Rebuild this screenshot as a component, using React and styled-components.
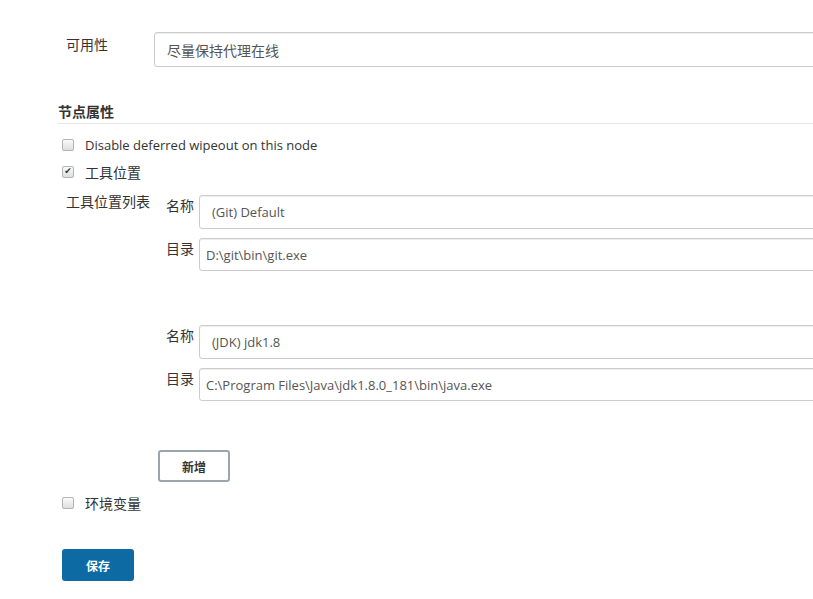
import styled, { createGlobalStyle } from "styled-components";

const GlobalStyle = createGlobalStyle`
    html, body {
        margin: 0;
        padding: 0;
        background: #fff;
        overflow: hidden;
    }
    body {
        font-family: "Open Sans", "Noto Sans CJK SC", sans-serif;
        font-size: 13px;
        color: #333;
    }
`;

const tools = [
    { name: "(Git) Default", home: "D:\\git\\bin\\git.exe" },
    { name: "(JDK) jdk1.8", home: "C:\\Program Files\\Java\\jdk1.8.0_181\\bin\\java.exe" },
];

export default function App() {
    return (
        <>
            <GlobalStyle />
            <Page>
                <FieldRow>
                    <FieldLabel>可用性</FieldLabel>
                    <TextBox defaultValue="尽量保持代理在线" $cjk />
                </FieldRow>

                <SectionTitle>节点属性</SectionTitle>

                <CheckRow>
                    <Check type="checkbox" />
                    <CheckText>Disable deferred wipeout on this node</CheckText>
                </CheckRow>
                <CheckRow>
                    <Check type="checkbox" defaultChecked />
                    <CheckText $cjk>工具位置</CheckText>
                </CheckRow>

                <ToolBlock>
                    <ToolLabel>工具位置列表</ToolLabel>
                    <ToolList>
                        {tools.map(tool => (
                            <ToolGroup key={tool.name}>
                                <ToolRow>
                                    <SmallLabel>名称</SmallLabel>
                                    <TextBox defaultValue={tool.name} $pad={12} $h={34} />
                                </ToolRow>
                                <ToolRow>
                                    <SmallLabel>目录</SmallLabel>
                                    <TextBox defaultValue={tool.home} $pad={6} $h={33} />
                                </ToolRow>
                            </ToolGroup>
                        ))}
                        <AddButton>新增</AddButton>
                    </ToolList>
                </ToolBlock>

                <CheckRow $top={7}>
                    <Check type="checkbox" />
                    <CheckText $cjk>环境变量</CheckText>
                </CheckRow>

                <SaveButton>保存</SaveButton>
            </Page>
        </>
    );
}

const Page = styled.div`
    width: 900px;
    padding: 32px 0 0 58px;
    box-sizing: border-box;
`;

const FieldRow = styled.div`
    display: flex;
    align-items: flex-start;
`;

const FieldLabel = styled.div`
    width: 96px;
    padding: 2px 0 0 8px;
    box-sizing: border-box;
    font-size: 14px;
    font-family: "Noto Sans CJK SC", sans-serif;
`;

const TextBox = styled.input`
    flex: 1;
    height: ${p => p.$h || 35}px;
    box-sizing: border-box;
    border: 1px solid #ccc;
    border-radius: 3px;
    box-shadow: inset 0 1px 1px rgba(0, 0, 0, 0.075);
    padding: 0 0 0 ${p => p.$pad || 12}px;
    font-family: "Open Sans", "Noto Sans CJK SC", sans-serif;
    font-size: ${p => (p.$cjk ? 14 : 13)}px;
    color: #555;
    outline: none;
`;

const SectionTitle = styled.div`
    margin-top: 34px;
    margin-bottom: 7px;
    padding-bottom: 2px;
    border-bottom: 1px solid #e5e5e5;
    font-family: "Noto Sans CJK SC", sans-serif;
    font-weight: bold;
    font-size: 14px;
    color: #333;
`;

const CheckRow = styled.label`
    display: flex;
    align-items: center;
    height: 27px;
    padding-left: 4px;
    margin-top: ${p => p.$top || 0}px;
`;

const Check = styled.input`
    appearance: none;
    position: relative;
    width: 12px;
    height: 12px;
    margin: 0 11px 0 0;
    border: 1px solid #b4b4b4;
    border-radius: 2px;
    background: linear-gradient(#fafafa, #dedede);
    box-sizing: border-box;

    &:checked::after {
        content: "✔";
        position: absolute;
        inset: 0;
        display: flex;
        align-items: center;
        justify-content: center;
        font-size: 9px;
        line-height: 1;
        color: #333;
        font-family: "DejaVu Sans", sans-serif;
    }
`;

const CheckText = styled.span`
    font-size: ${p => (p.$cjk ? 14 : 13)}px;
    font-family: "Open Sans", "Noto Sans CJK SC", sans-serif;
`;

const ToolBlock = styled.div`
    display: flex;
    align-items: flex-start;
    margin-top: 6px;
`;

const ToolLabel = styled.div`
    width: 108px;
    padding: 0 0 0 8px;
    box-sizing: border-box;
    font-family: "Noto Sans CJK SC", sans-serif;
    font-size: 14px;
`;

const ToolList = styled.div`
    flex: 1;
    display: flex;
    flex-direction: column;
    padding-top: 4px;
`;

const ToolGroup = styled.div`
    display: flex;
    flex-direction: column;
    gap: 9px;
    margin-bottom: 54px;
`;

const ToolRow = styled.div`
    display: flex;
    align-items: flex-start;
`;

const SmallLabel = styled.div`
    width: 33px;
    font-family: "Noto Sans CJK SC", sans-serif;
    font-size: 14px;
`;

const AddButton = styled.button`
    align-self: flex-start;
    margin-left: -8px;
    margin-top: -5px;
    width: 72px;
    height: 32px;
    background: #fff;
    border: 2px solid #9aa5ad;
    border-radius: 3px;
    font-family: "Noto Sans CJK SC", sans-serif;
    font-weight: bold;
    font-size: 12px;
    color: #333;
`;

const SaveButton = styled.button`
    display: block;
    margin: 33px 0 0 4px;
    width: 72px;
    height: 32px;
    background: #0e6aa2;
    border: none;
    border-radius: 3px;
    color: #fff;
    font-family: "Noto Sans CJK SC", sans-serif;
    font-weight: bold;
    font-size: 12px;
`;
